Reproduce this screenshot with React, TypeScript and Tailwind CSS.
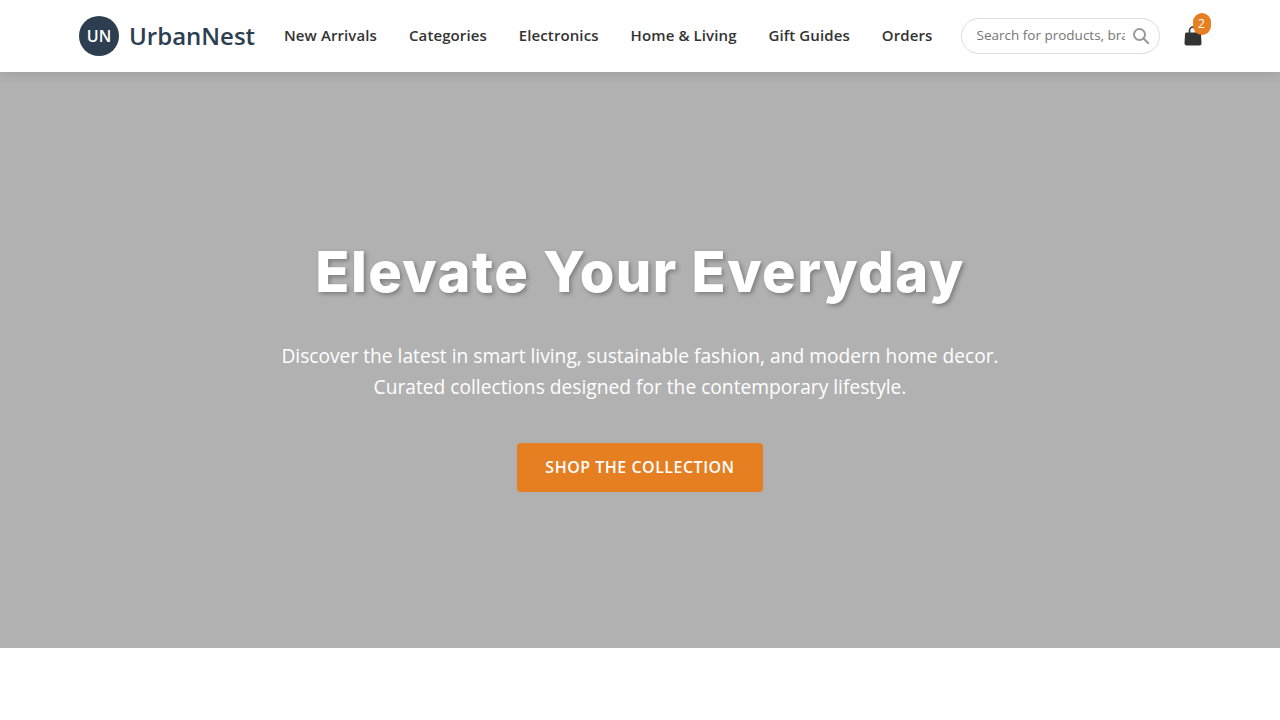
import React from "react";

const links = ["New Arrivals", "Categories", "Electronics", "Home & Living", "Gift Guides", "Orders"];

export default function App() {
  return (
    <div className="min-h-[720px] bg-white font-['Open_Sans',sans-serif]">
      <header className="relative z-10 h-[72px] bg-white shadow-[0_2px_10px_rgba(0,0,0,0.1)] flex justify-center">
        <div className="w-[1280px] pl-[79px] pr-[70px] flex items-center">
          <div className="flex items-center gap-[10px] w-[176px] shrink-0">
            <div className="w-10 h-10 rounded-full bg-[#2c3e50] flex items-center justify-center text-white font-semibold text-[16px] shrink-0">UN</div>
            <span className="text-[24px] font-semibold text-[#2c3e50] leading-none whitespace-nowrap">UrbanNest</span>
          </div>
          <nav className="flex items-center gap-8 ml-[29px] mb-[2px]">
            {links.map((l) => (
              <a key={l} className="text-[15px] font-semibold text-[#333333] whitespace-nowrap tracking-[0.1px]">{l}</a>
            ))}
          </nav>
          <div className="ml-[28px] w-[199px] h-9 shrink-0 rounded-[18px] border border-[#dddddd] flex items-center pl-[15px] pr-[10px]">
            <span className="flex-1 overflow-hidden whitespace-nowrap text-[13.5px] text-[#757575] mb-[2px]">Search for products, brands...</span>
            <svg className="ml-2 shrink-0" width="16" height="16" viewBox="0 0 16 16" fill="none" stroke="#999999" strokeWidth="2">
              <circle cx="6.5" cy="6.5" r="5.5" />
              <path d="M10.5 10.5 15.5 15.5" strokeLinecap="round" />
            </svg>
          </div>
          <div className="relative ml-[24px] w-[18px] h-[18px] shrink-0 -top-[1px]">
            <svg width="18" height="20" viewBox="0 0 18 20">
              <path d="M5.5 7V4.5a3.5 3.5 0 0 1 7 0V7" fill="none" stroke="#333333" strokeWidth="1.6" />
              <path d="M2.5 6.5h13a1.5 1.5 0 0 1 1.5 1.5l.5 9a2.5 2.5 0 0 1-2.5 2.5h-12A2.5 2.5 0 0 1 .5 17L1 8a1.5 1.5 0 0 1 1.5-1.5z" fill="#333333" />
            </svg>
            <span className="absolute -top-[13px] left-[9px] w-[18px] h-[22px] rounded-full bg-[#e67e22] text-white text-[12px] flex items-center justify-center">2</span>
          </div>
        </div>
      </header>
      <section className="h-[576px] pt-[11px] bg-[#b1b1b1] flex flex-col items-center justify-center text-center text-white">
        <h1 className="text-[56px] font-extrabold leading-[1.2] mb-[35px] tracking-[1.45px] font-['Inter',sans-serif] [text-shadow:2px_2px_4px_rgba(0,0,0,0.3)]">Elevate Your Everyday</h1>
        <p className="text-[19.2px] leading-[1.6] mb-10 max-w-[800px]">
          Discover the latest in smart living, sustainable fashion, and modern home decor.<br />
          Curated collections designed for the contemporary lifestyle.
        </p>
        <button className="w-[246px] h-[49px] rounded bg-[#e67e22] text-white font-semibold text-[16px] tracking-[0.5px]">SHOP THE COLLECTION</button>
      </section>
    </div>
  );
}
